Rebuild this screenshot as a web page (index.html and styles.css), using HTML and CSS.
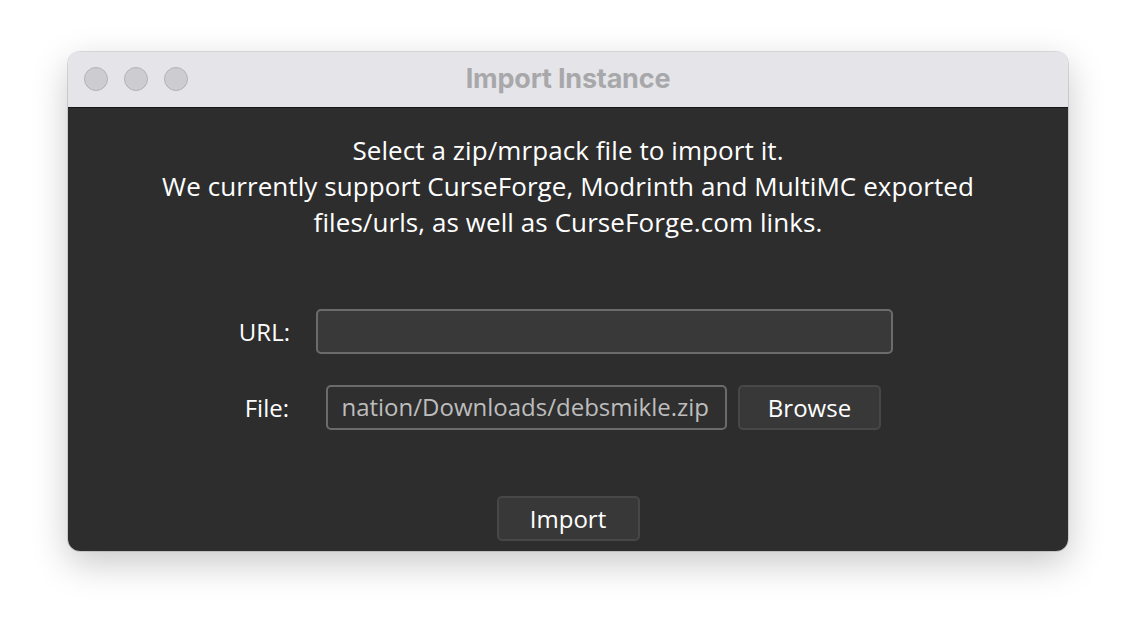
FILE: index.html
```html
<!DOCTYPE html>
<html>
<head>
<meta charset="utf-8">
<link rel="stylesheet" href="styles.css">
</head>
<body>
<div class="window">
  <div class="titlebar">
    <div class="lights">
      <span class="light"></span>
      <span class="light"></span>
      <span class="light"></span>
    </div>
    <div class="title">Import Instance</div>
  </div>
  <div class="content">
    <p class="intro">Select a zip/mrpack file to import it.<br>We currently support CurseForge, Modrinth and MultiMC exported<br>files/urls, as well as CurseForge.com links.</p>
    <div class="form">
      <label class="label">URL:</label>
      <div class="field url-field"></div>
      <label class="label label-file">File:</label>
      <div class="file-group">
        <div class="field file-field">nation/Downloads/debsmikle.zip</div>
        <button class="btn browse">Browse</button>
      </div>
    </div>
    <div class="actions">
      <button class="btn import">Import</button>
    </div>
  </div>
</div>
</body>
</html>
```

FILE: styles.css
```css
html, body {
  margin: 0;
  padding: 0;
  background: #ffffff;
}
body {
  padding-top: 52px;
  height: 636px;
  box-sizing: border-box;
  overflow: hidden;
}
.window {
  width: 1000px;
  height: 499px;
  margin: 0 auto;
  border-radius: 12px;
  overflow: hidden;
  box-shadow: 0 0 0 1px rgba(0,0,0,0.12), 0 12px 36px rgba(0,0,0,0.22);
  display: flex;
  flex-direction: column;
  font-family: "Open Sans", "Noto Sans", sans-serif;
}
.titlebar {
  height: 55px;
  background: #e4e4e9;
  border-bottom: 1px solid #161616;
  position: relative;
  display: flex;
  align-items: center;
  justify-content: center;
  flex-shrink: 0;
}
.lights {
  position: absolute;
  left: 16px;
  top: 15px;
  display: flex;
  gap: 16px;
}
.light {
  width: 22px;
  height: 22px;
  border-radius: 50%;
  background: #cdcdd1;
  border: 1px solid #b3b3b7;
}
.title {
  font-family: Inter, "Liberation Sans", sans-serif;
  font-weight: 700;
  font-size: 27px;
  letter-spacing: -0.2px;
  color: #a8a8ab;
  margin-top: -2px;
}
.content {
  flex: 1;
  background: #2d2d2d;
  display: flex;
  flex-direction: column;
  align-items: center;
  color: #ffffff;
}
.intro {
  margin: 24px 0 0;
  text-align: center;
  font-size: 26px;
  line-height: 36px;
  letter-spacing: 0.08px;
}
.form {
  margin-top: 69px;
  align-self: flex-start;
  margin-left: 132px;
  display: grid;
  grid-template-columns: 90px auto;
  column-gap: 26px;
  row-gap: 31px;
  align-items: center;
}
.label {
  text-align: right;
  font-size: 24px;
}
.label-file {
  margin-right: 1px;
}
.field {
  box-sizing: border-box;
  height: 45px;
  border: 2px solid #6b6b6b;
  border-radius: 5px;
}
.url-field {
  width: 577px;
  background: #393939;
}
.file-group {
  display: flex;
  gap: 11px;
  margin-left: 10px;
}
.file-field {
  width: 401px;
  background: #2f2f2f;
  color: #bdbdbd;
  font-size: 24px;
  padding: 0 16px 0 12px;
  line-height: 40px;
  white-space: nowrap;
  overflow: hidden;
  text-align: right;
}
.btn {
  box-sizing: border-box;
  height: 45px;
  width: 143px;
  background: #383838;
  border: 2px solid #474747;
  border-radius: 5px;
  color: #ffffff;
  font-family: "Open Sans", "Noto Sans", sans-serif;
  font-size: 24px;
  padding: 0;
}
.actions {
  margin-top: 66px;
}
```
